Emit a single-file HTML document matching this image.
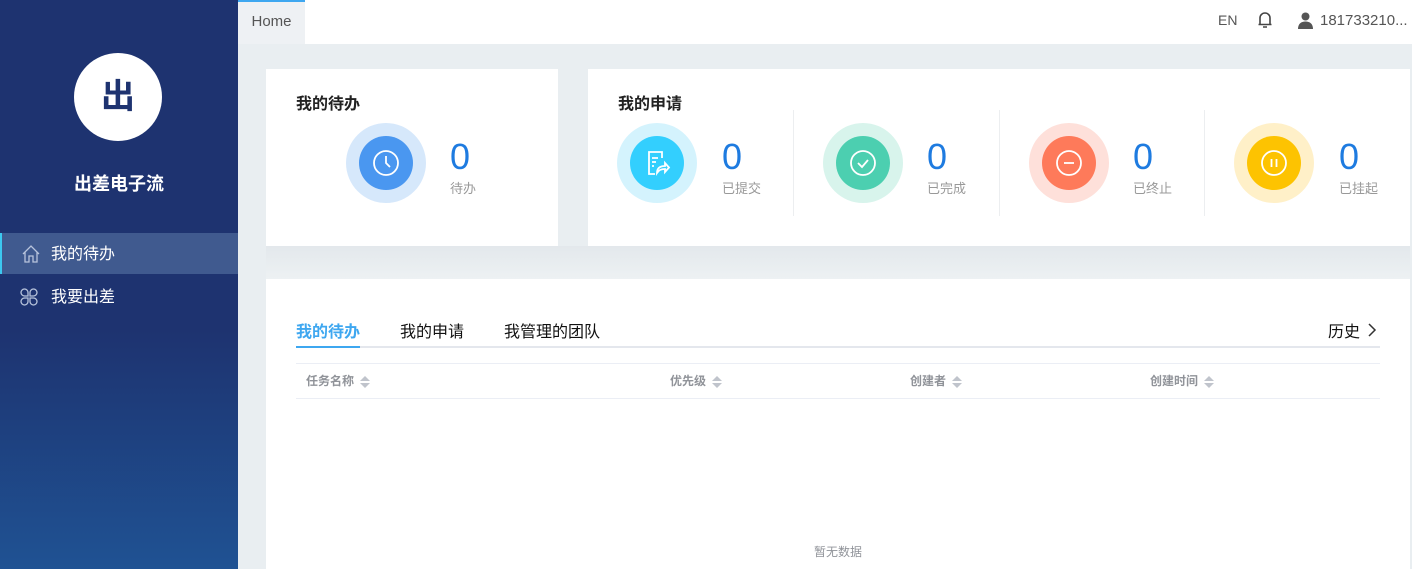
<!DOCTYPE html>
<html><head><meta charset="utf-8"><style>
*{margin:0;padding:0;box-sizing:border-box}
body{width:1412px;height:569px;overflow:hidden;font-family:"Liberation Sans","Noto Sans CJK SC",sans-serif;background:#e9eef1;position:relative}
.side{position:absolute;left:0;top:0;width:238px;height:569px;background:linear-gradient(#1e3370 0,#1e3370 330px,#1f5293 569px)}
.logo{position:absolute;left:74px;top:53px;width:88px;height:88px;border-radius:50%;background:#fff;text-align:center;line-height:88px;font-size:34px;font-weight:bold;color:#1e3370}
.brand{position:absolute;left:0;width:238px;top:170px;text-align:center;color:#fff;font-size:18px;font-weight:bold}
.mi{position:absolute;left:0;width:238px;height:41px;color:#fff;font-size:16px;line-height:44px;padding-left:51px}
.mi.act{background:#405a8f;border-left:2px solid #3cc8f0;padding-left:49px}
.mi svg{position:absolute;left:19px;top:11px}
.top{position:absolute;left:238px;top:0;right:0;height:44px;background:#fff}
.home{position:absolute;left:0;top:0;width:67px;height:44px;background:#eef1f4;border-top:2px solid #3ea7f0;color:#555;font-size:15px;line-height:40px;text-align:center}
.card{position:absolute;background:#fff}
.h{position:absolute;font-size:16px;font-weight:bold;color:#222}
.oc{position:absolute;width:80px;height:80px;border-radius:50%}
.ic{position:absolute;left:13px;top:13px;width:54px;height:54px;border-radius:50%}
.ic svg{position:absolute;left:12px;top:12px}
.num{position:absolute;font-size:36px;color:#1e7be0;line-height:36px}
.lab{position:absolute;font-size:13px;color:#999}
.div{position:absolute;top:110px;width:1px;height:106px;background:#eceef0}
.th{position:absolute;top:372px;font-size:12px;font-weight:bold;color:#909399}
.sort{display:inline-block;width:10px;height:12px;position:relative;vertical-align:middle;margin-left:6px}
.sort:before{content:"";position:absolute;left:0;top:0;border:5px solid transparent;border-top:0;border-bottom:5px solid #c0c4cc}
.sort:after{content:"";position:absolute;left:0;top:7px;border:5px solid transparent;border-bottom:0;border-top:5px solid #c0c4cc}
</style></head><body>
<div class="side">
<div class="logo">出</div>
<div class="brand">出差电子流</div>
<div class="mi act" style="top:233px"><svg width="20" height="20" viewBox="0 0 20 20" fill="none" stroke="#b8c4dc" stroke-width="1.3"><path d="M2 10 L10 2 L18 10 M4 8 V18 H8 V12 H12 V18 H16 V8"/></svg>我的待办</div>
<div class="mi" style="top:276px"><svg width="20" height="20" viewBox="0 0 20 20" fill="none" stroke="#b8c4dc" stroke-width="1.3"><path d="M9 9H5.5A3.5 3.5 0 1 1 9 5.5Z M11 9V5.5A3.5 3.5 0 1 1 14.5 9Z M9 11V14.5A3.5 3.5 0 1 1 5.5 11Z M11 11H14.5A3.5 3.5 0 1 1 11 14.5Z"/></svg>我要出差</div>
</div>
<div class="top">
<div class="home">Home</div>
<div style="position:absolute;left:980px;top:12px;font-size:14px;color:#555">EN</div>
<svg style="position:absolute;left:1019px;top:11px" width="16" height="18" viewBox="0 0 16 18" fill="none" stroke="#444" stroke-width="1.6"><path d="M3 13V7a5 5 0 0 1 10 0v6 M1.5 13.5h13 M6 16h4"/></svg>
<svg style="position:absolute;left:1060px;top:12px" width="15" height="17" viewBox="0 0 15 17" fill="#555"><circle cx="7.5" cy="4.5" r="4"/><path d="M0 17c0-5 3-7.5 7.5-7.5S15 12 15 17z"/></svg>
<div style="position:absolute;left:1082px;top:12px;font-size:15px;color:#555">181733210...</div>
</div>
<div style="position:absolute;left:266px;top:246px;width:1144px;height:33px;background:linear-gradient(#e3e8ec,#edf1f3)"></div>
<div class="card" style="left:266px;top:69px;width:292px;height:177px">
<div class="h" style="left:30px;top:21px">我的待办</div>
</div>
<div class="card" style="left:588px;top:69px;width:822px;height:177px">
<div class="h" style="left:30px;top:21px">我的申请</div>
</div>
<div class="div" style="left:793px"></div><div class="div" style="left:999px"></div><div class="div" style="left:1204px"></div>

<div class="oc" style="left:346px;top:123px;background:#d6e8fb"><div class="ic" style="background:#4a97f0"><svg width="30" height="30" viewBox="0 0 30 30" fill="none" stroke="#fff" stroke-width="1.8"><circle cx="15" cy="15" r="12"/><path d="M15 8v7l4 4"/></svg></div></div>
<div class="num" style="left:450px;top:139px">0</div><div class="lab" style="left:450px;top:178px">待办</div>

<div class="oc" style="left:617px;top:123px;background:#d4f3fd"><div class="ic" style="background:#33cffe"><svg width="30" height="30" viewBox="0 0 30 30" fill="none" stroke="#fff" stroke-width="1.8"><path d="M20 10V4H7v22h6 M10 10h6 M10 14h4 M10 18h2 M15 25c0-5 3-7 8-7v-3l4 4.5-4 4.5v-3c-4 0-6 1-8 4z"/></svg></div></div>
<div class="num" style="left:722px;top:139px">0</div><div class="lab" style="left:722px;top:178px">已提交</div>

<div class="oc" style="left:823px;top:123px;background:#d8f4ec"><div class="ic" style="background:#4ccfb0"><svg width="30" height="30" viewBox="0 0 30 30" fill="none" stroke="#fff" stroke-width="1.8"><circle cx="15" cy="15" r="12"/><path d="M10 15l4 4 6-7"/></svg></div></div>
<div class="num" style="left:927px;top:139px">0</div><div class="lab" style="left:927px;top:178px">已完成</div>

<div class="oc" style="left:1029px;top:123px;background:#fee0da"><div class="ic" style="background:#fe7a5a"><svg width="30" height="30" viewBox="0 0 30 30" fill="none" stroke="#fff" stroke-width="1.8"><circle cx="15" cy="15" r="12"/><path d="M10 15h10"/></svg></div></div>
<div class="num" style="left:1133px;top:139px">0</div><div class="lab" style="left:1133px;top:178px">已终止</div>

<div class="oc" style="left:1234px;top:123px;background:#fff0c8"><div class="ic" style="background:#fdc301"><svg width="30" height="30" viewBox="0 0 30 30" fill="none" stroke="#fff" stroke-width="1.8"><circle cx="15" cy="15" r="12"/><path d="M12.5 11v8 M17.5 11v8"/></svg></div></div>
<div class="num" style="left:1339px;top:139px">0</div><div class="lab" style="left:1339px;top:178px">已挂起</div>

<div class="card" style="left:266px;top:279px;width:1144px;height:290px"></div>
<div style="position:absolute;left:296px;top:318px;font-size:16px;color:#3ea7f0;font-weight:bold">我的待办</div>
<div style="position:absolute;left:400px;top:318px;font-size:16px;color:#111">我的申请</div>
<div style="position:absolute;left:504px;top:318px;font-size:16px;color:#111">我管理的团队</div>
<div style="position:absolute;left:1328px;top:318px;font-size:16px;color:#111">历史</div>
<svg style="position:absolute;left:1367px;top:323px" width="10" height="14" viewBox="0 0 10 14" fill="none" stroke="#333" stroke-width="1.5"><path d="M2 1l6 6-6 6"/></svg>
<div style="position:absolute;left:296px;top:346px;width:1084px;height:2px;background:#e4e7ed"></div>
<div style="position:absolute;left:296px;top:346px;width:64px;height:2px;background:#3ea7f0"></div>
<div style="position:absolute;left:296px;top:363px;width:1084px;height:1px;background:#ebeef5"></div>
<div style="position:absolute;left:296px;top:398px;width:1084px;height:1px;background:#ebeef5"></div>
<div class="th" style="left:306px">任务名称<span class="sort"></span></div>
<div class="th" style="left:670px">优先级<span class="sort"></span></div>
<div class="th" style="left:910px">创建者<span class="sort"></span></div>
<div class="th" style="left:1150px">创建时间<span class="sort"></span></div>
<div style="position:absolute;left:814px;top:543px;font-size:12px;color:#909399">暂无数据</div>
</body></html>
